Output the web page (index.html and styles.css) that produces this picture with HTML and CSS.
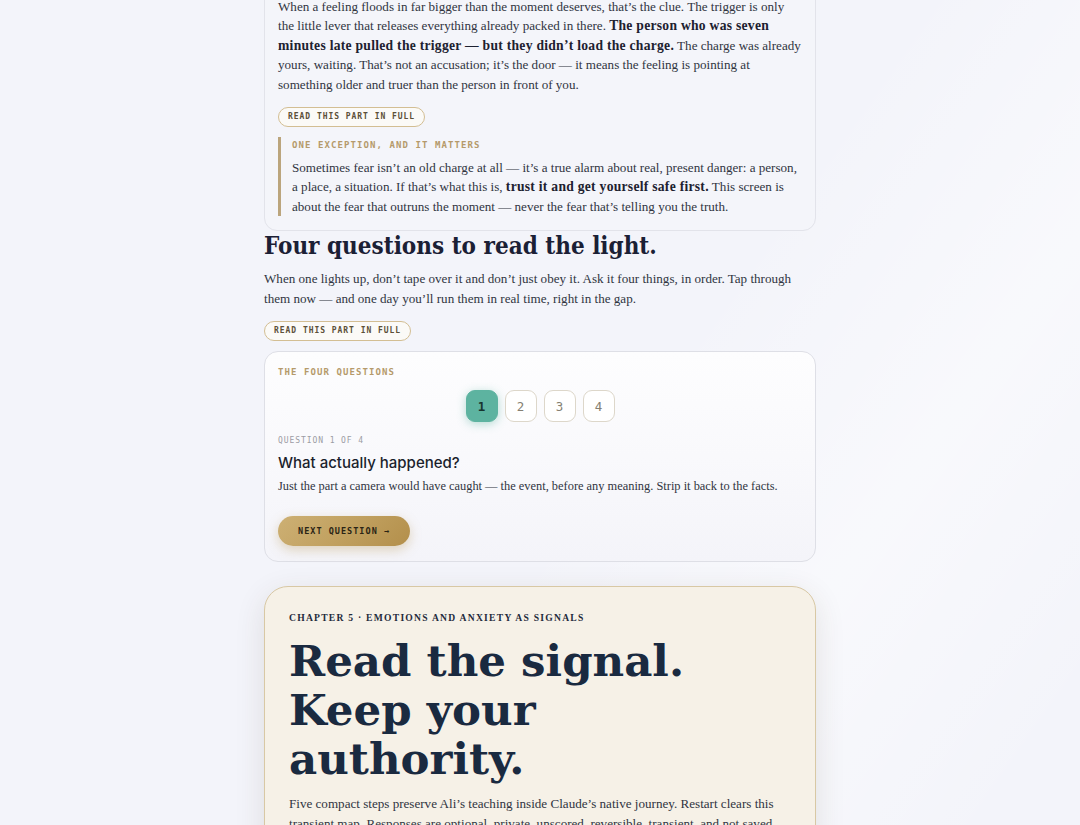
FILE: index.html
```html
<!DOCTYPE html>
<html lang="en">
<head>
<meta charset="utf-8">
<title>Read the signal</title>
<link rel="stylesheet" href="styles.css">
</head>
<body>
<main class="page">
  <section class="card card-top">
    <p class="body-text">When a feeling floods in far bigger than the moment deserves, that’s the clue. The trigger is only the little lever that releases everything already packed in there. <strong>The person who was seven minutes late pulled the trigger — but they didn’t load the charge.</strong> The charge was already yours, waiting. That’s not an accusation; it’s the door — it means the feeling is pointing at something older and truer than the person in front of you.</p>
    <button class="pill">READ THIS PART IN FULL</button>
    <div class="exception">
      <div class="label">ONE EXCEPTION, AND IT MATTERS</div>
      <p class="body-text">Sometimes fear isn’t an old charge at all — it’s a true alarm about real, present danger: a person, a place, a situation. If that’s what this is, <strong>trust it and get yourself safe first.</strong> This screen is about the fear that outruns the moment — never the fear that’s telling you the truth.</p>
    </div>
  </section>

  <h2 class="section-title">Four questions to read the light.</h2>
  <p class="body-text intro">When one lights up, don’t tape over it and don’t just obey it. Ask it four things, in order. Tap through them now — and one day you’ll run them in real time, right in the gap.</p>
  <button class="pill">READ THIS PART IN FULL</button>

  <section class="card questions">
    <div class="label">THE FOUR QUESTIONS</div>
    <div class="steps">
      <button class="step active">1</button>
      <button class="step">2</button>
      <button class="step">3</button>
      <button class="step">4</button>
    </div>
    <div class="qmeta">QUESTION 1 OF 4</div>
    <h3 class="qtitle">What actually happened?</h3>
    <p class="qdesc">Just the part a camera would have caught — the event, before any meaning. Strip it back to the facts.</p>
    <button class="next">NEXT QUESTION →</button>
  </section>

  <section class="chapter">
    <div class="kicker">CHAPTER 5 · EMOTIONS AND ANXIETY AS SIGNALS</div>
    <h1 class="headline">Read the signal. Keep your authority.</h1>
    <p class="body-text">Five compact steps preserve Ali’s teaching inside Claude’s native journey. Restart clears this transient map. Responses are optional, private, unscored, reversible, transient, and not saved.</p>
  </section>
</main>
</body>
</html>
```

FILE: styles.css
```css
* { box-sizing: border-box; }

html, body {
  margin: 0;
  padding: 0;
}

body {
  background:
    linear-gradient(125deg, rgba(255,255,255,0) 55%, rgba(255,255,255,0.45) 75%, rgba(255,255,255,0) 95%),
    #f3f4fa;
  font-family: "Liberation Serif", "Times New Roman", serif;
  color: #30343f;
  height: 825px;
  overflow: hidden;
}

.page {
  width: 552px;
  margin: 0 auto;
}

.body-text {
  margin: 0;
  font-size: 13.1px;
  line-height: 19.4px;
  color: #30343f;
}

.body-text strong {
  color: #1d2130;
  font-weight: 700;
  font-size: 13.6px;
  letter-spacing: 0.02em;
}

.card {
  border: 1px solid #e2e3ea;
  border-radius: 13px;
}

.card-top {
  margin-top: -18px;
  padding: 14px 13px 14px;
  background: #f4f5fa;
}

.pill {
  display: inline-block;
  margin-top: 13px;
  height: 20px;
  padding: 0 9px;
  border: 1px solid #d3be93;
  border-radius: 999px;
  background: #fbfaf7;
  font-family: "DejaVu Sans Mono", monospace;
  font-size: 8px;
  font-weight: 700;
  letter-spacing: 0.12em;
  color: #5c5038;
  line-height: 18px;
  cursor: pointer;
}

.card-top .pill { display: block; }

.exception {
  margin-top: 10px;
  border-left: 3px solid #bba57d;
  padding: 2px 0 0 11px;
}

.label {
  font-family: "DejaVu Sans Mono", monospace;
  font-size: 9px;
  line-height: 12px;
  font-weight: 700;
  letter-spacing: 0.12em;
  color: #b59a6b;
}

.exception .body-text {
  margin-top: 7px;
}

.section-title {
  margin: 0;
  font-family: "DejaVu Serif", Georgia, serif;
  font-weight: 700;
  font-size: 24px;
  font-stretch: semi-condensed;
  line-height: 30px;
  color: #1b2035;
}

.intro {
  margin-top: 8px;
}

.intro + .pill {
  display: block;
}

.questions {
  margin-top: 10px;
  padding: 14px 13px 15px;
  border-radius: 14px;
  background: linear-gradient(180deg, #fdfdfe 0%, #f9f9fc 50%, #f4f4f9 100%);
  border-color: #dedfe6;
}

.steps {
  margin-top: 12px;
  display: flex;
  justify-content: center;
  gap: 7px;
}

.step {
  width: 32px;
  height: 32px;
  border: 1px solid #ddd7ca;
  border-radius: 9px;
  background: #ffffff;
  font-family: "DejaVu Sans Mono", monospace;
  font-size: 12.5px;
  color: #857f72;
  padding: 0;
  cursor: pointer;
}

.step.active {
  background: #5db3a0;
  border-color: #5db3a0;
  color: #17342e;
  font-weight: 700;
  box-shadow: 0 2px 10px rgba(93, 179, 160, 0.45);
}

.qmeta {
  margin-top: 13px;
  font-family: "DejaVu Sans Mono", monospace;
  font-size: 8px;
  line-height: 12px;
  letter-spacing: 0.115em;
  color: #9c9ca4;
}

.qtitle {
  margin: 6px 0 0;
  font-family: Inter, "Noto Sans", sans-serif;
  font-weight: 500;
  font-size: 15px;
  line-height: 20px;
  color: #1b1f2d;
}

.qdesc {
  margin: 4px 0 0;
  font-size: 12.4px;
  line-height: 19.4px;
  color: #30343f;
}

.next {
  display: block;
  margin-top: 20px;
  height: 30px;
  padding: 0 20px;
  border: none;
  border-radius: 999px;
  background: linear-gradient(135deg, #cdb074 0%, #c1a160 50%, #b38f4b 100%);
  box-shadow: 0 4px 12px rgba(180, 145, 75, 0.35);
  font-family: "DejaVu Sans Mono", monospace;
  font-size: 8.5px;
  font-weight: 700;
  letter-spacing: 0.12em;
  color: #2a2415;
  cursor: pointer;
}

.chapter {
  margin-top: 24px;
  padding: 24px 24px 25px;
  border: 1px solid #d8c8a4;
  border-radius: 24px;
  background: #f6f1e7;
  box-shadow: 0 8px 30px rgba(70, 55, 30, 0.12);
}

.kicker {
  font-family: "Liberation Serif", Georgia, serif;
  font-weight: 700;
  font-size: 9.6px;
  line-height: 14px;
  letter-spacing: 0.13em;
  color: #1f2a3b;
}

.headline {
  max-width: 470px;
  margin: 11px 0 0;
  font-family: "DejaVu Serif", Georgia, serif;
  font-weight: 700;
  font-size: 43.5px;
  line-height: 49px;
  color: #1a2a40;
}

.chapter .body-text {
  margin-top: 11px;
  color: #30343f;
}
```
